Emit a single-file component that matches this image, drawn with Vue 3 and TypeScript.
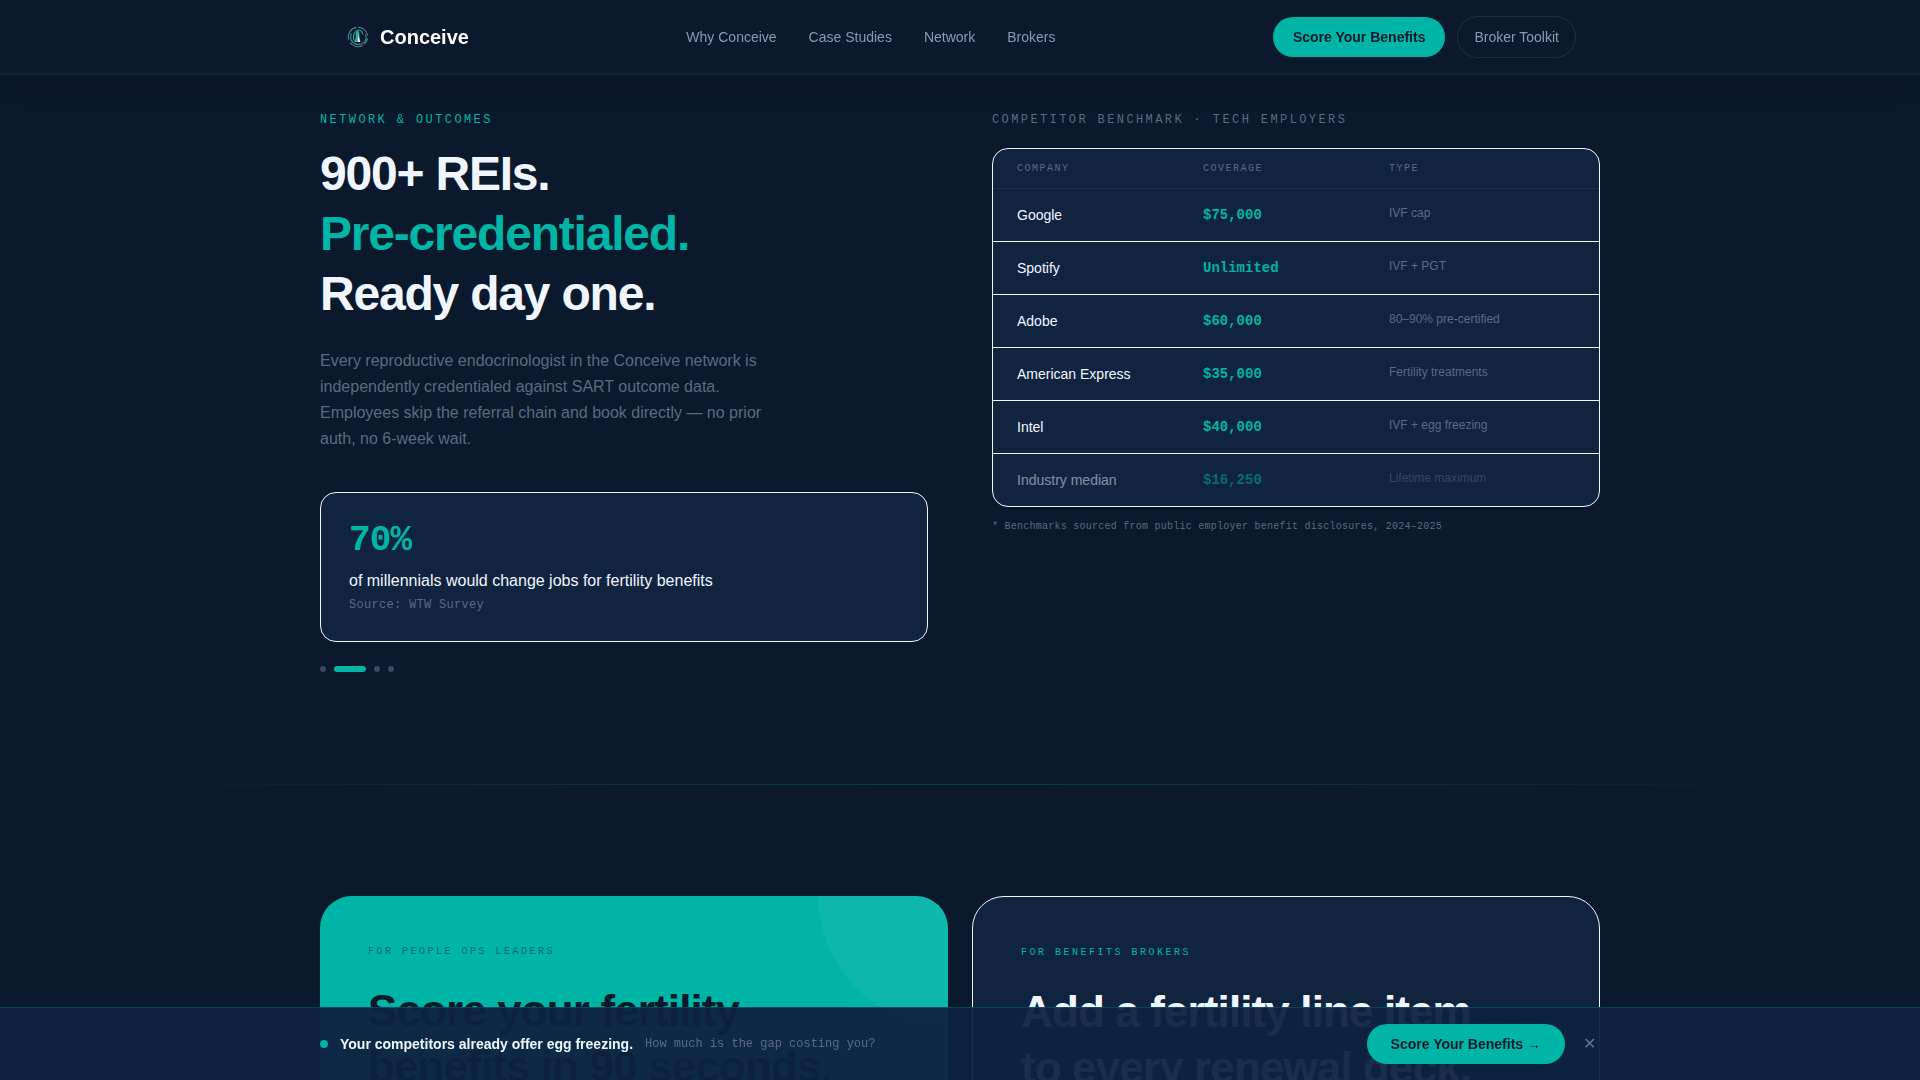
<script setup lang="ts">
import { ref } from 'vue'

interface Benchmark {
  company: string
  coverage: string
  type: string
  baseline?: boolean
}

interface Stat {
  value: string
  text: string
  source: string
}

const navLinks: string[] = ['Why Conceive', 'Case Studies', 'Network', 'Brokers']

const benchmarks: Benchmark[] = [
  { company: 'Google', coverage: '$75,000', type: 'IVF cap' },
  { company: 'Spotify', coverage: 'Unlimited', type: 'IVF + PGT' },
  { company: 'Adobe', coverage: '$60,000', type: '80–90% pre-certified' },
  { company: 'American Express', coverage: '$35,000', type: 'Fertility treatments' },
  { company: 'Intel', coverage: '$40,000', type: 'IVF + egg freezing' },
  { company: 'Industry median', coverage: '$16,250', type: 'Lifetime maximum', baseline: true },
]

const stat: Stat = {
  value: '70%',
  text: 'of millennials would change jobs for fertility benefits',
  source: 'Source: WTW Survey',
}

const slideCount = 4
const activeSlide = ref(2)
const barOpen = ref(true)
</script>

<template>
  <div class="page">
    <header class="header">
      <nav class="nav">
        <a class="brand" href="#">
          <svg class="logo" viewBox="0 0 28 28" fill="none" aria-hidden="true">
            <path d="M12.500 4.400a9.700 9.700 0 0 0-7.800 12.200M6 19.500a9.700 9.700 0 0 0 12.500 3.100" stroke="#5b7f90" stroke-width="1.100" />
            <path d="M14.500 4.300c4.500.3 8.300 3.700 9 8.200M23.500 15.500a9.700 9.700 0 0 1-3.500 6" stroke="#7a97a6" stroke-width="1" />
            <path d="M7.500 10.500a7.600 7.600 0 0 0 1.500 9c3 2.700 8 2.800 11-.2 2-2.100 2.500-5.300 1.200-8" stroke="#2b8d8b" stroke-width="1.200" />
            <path d="M10.500 18c-2-3-1.300-7.500 2-10.500 3.500-1.500 6 1 6.500 4" stroke="#1f9e97" stroke-width="1.100" />
            <path d="M14 7c-2.200 2.200-3 4.500-2 7l-1.500 5h5l-.4-5.500c.8-2.200.3-4.500-1.100-6.500z" fill="#2fae9f" />
            <path d="M14.400 11l2 8h-2.600z" fill="#d5f3f2" />
          </svg>
          <span>Conceive</span>
        </a>
        <div class="links">
          <a v-for="link in navLinks" :key="link" href="#">{{ link }}</a>
        </div>
        <div class="actions">
          <button type="button" class="btn btn-primary">Score Your Benefits</button>
          <button type="button" class="btn btn-outline">Broker Toolkit</button>
        </div>
      </nav>
    </header>

    <main>
      <section class="section network">
        <div>
          <p class="eyebrow teal">NETWORK &amp; OUTCOMES</p>
          <h2 class="headline">
            900+ REIs.<br />
            <span class="teal">Pre-credentialed.</span><br />
            Ready day one.
          </h2>
          <p class="lead">
            Every reproductive endocrinologist in the Conceive network is independently
            credentialed against SART outcome data. Employees skip the referral chain and book
            directly — no prior auth, no 6-week wait.
          </p>
          <article class="stat">
            <p class="stat-value">{{ stat.value }}</p>
            <p class="stat-text">{{ stat.text }}</p>
            <p class="stat-source">{{ stat.source }}</p>
          </article>
          <div class="dots">
            <button
              v-for="n in slideCount"
              :key="n"
              type="button"
              class="dot"
              :class="{ active: n === activeSlide }"
              :aria-label="`Slide ${n}`"
              @click="activeSlide = n"
            ></button>
          </div>
        </div>

        <div>
          <p class="eyebrow table-title">COMPETITOR BENCHMARK · TECH EMPLOYERS</p>
          <table class="bench">
            <thead>
              <tr>
                <th scope="col">COMPANY</th>
                <th scope="col">COVERAGE</th>
                <th scope="col">TYPE</th>
              </tr>
            </thead>
            <tbody>
              <tr v-for="row in benchmarks" :key="row.company" :class="{ baseline: row.baseline }">
                <td class="company">{{ row.company }}</td>
                <td class="coverage">{{ row.coverage }}</td>
                <td class="type">{{ row.type }}</td>
              </tr>
            </tbody>
          </table>
          <p class="note">* Benchmarks sourced from public employer benefit disclosures, 2024–2025</p>
        </div>
      </section>

      <div class="divider"></div>

      <section class="section cards">
        <article class="card card-teal">
          <p class="card-eyebrow">FOR PEOPLE OPS LEADERS</p>
          <h3>Score your fertility<br />benefits in 90 seconds.</h3>
        </article>
        <article class="card card-navy">
          <p class="card-eyebrow">FOR BENEFITS BROKERS</p>
          <h3>Add a fertility line item<br />to every renewal deck.</h3>
        </article>
      </section>
    </main>

    <aside v-if="barOpen" class="bar">
      <div class="bar-inner">
        <span class="pulse"></span>
        <strong>Your competitors already offer egg freezing.</strong>
        <span class="bar-note">How much is the gap costing you?</span>
        <div class="bar-actions">
          <button type="button" class="btn btn-primary btn-wide">Score Your Benefits →</button>
          <button type="button" class="close" aria-label="Dismiss" @click="barOpen = false">✕</button>
        </div>
      </div>
    </aside>
  </div>
</template>

<style>
body {
  margin: 0;
  background: #0a192b;
}
</style>

<style scoped>
.page {
  --teal: #00b4a6;
  --ink: #0a192b;
  --panel: #10243f;
  --light: #f0f6ff;
  --muted: #5b6a81;
  --mono: 'Liberation Mono', monospace;
  height: 100vh;
  overflow: hidden;
  background: var(--ink);
  color: var(--light);
  font-family: 'Liberation Sans', Arial, sans-serif;
  font-size: 16px;
  line-height: 24px;
}

.page * {
  box-sizing: border-box;
}

p,
h2,
h3 {
  margin: 0;
}

a {
  color: inherit;
  text-decoration: none;
}

button {
  margin: 0;
  border: 0;
  font-family: inherit;
  cursor: pointer;
}

.teal {
  color: var(--teal);
}

.header {
  position: fixed;
  inset: 0 0 auto;
  z-index: 10;
  background: #0a192b;
  border-bottom: 1px solid rgba(255, 255, 255, 0.05);
  box-shadow: 0 4px 32px rgba(0, 0, 0, 0.2);
}

.nav {
  display: flex;
  align-items: center;
  justify-content: space-between;
  max-width: 1280px;
  margin: 0 auto;
  padding: 16px 24px;
}

.brand {
  display: flex;
  align-items: center;
  gap: 8px;
  color: #fff;
  font-size: 20px;
  font-weight: 700;
  line-height: 28px;
}

.logo {
  width: 28px;
  height: 28px;
}

.links {
  display: flex;
  gap: 32px;
  color: #8a99af;
  font-size: 14px;
  line-height: 20px;
}

.actions {
  display: flex;
  align-items: center;
  gap: 12px;
}

.btn {
  padding: 10px 20px;
  border-radius: 24px;
  font-size: 14px;
  line-height: 20px;
}

.btn-primary {
  background: var(--teal);
  color: var(--ink);
  font-weight: 700;
}

.btn-wide {
  padding: 10px 24px;
}

.btn-outline {
  padding: 10px 16px;
  border: 1px solid rgba(148, 163, 184, 0.15);
  background: transparent;
  color: #8a99af;
}

.section {
  display: grid;
  grid-template-columns: repeat(2, minmax(0, 1fr));
  max-width: 1280px;
  margin: 0 auto;
  padding: 112px 0;
}

.network {
  gap: 64px;
}

.eyebrow {
  margin-bottom: 16px;
  font-family: var(--mono);
  font-size: 12px;
  line-height: 16px;
  letter-spacing: 0.2em;
}

.table-title {
  margin-bottom: 20px;
  color: var(--muted);
}

.headline {
  margin-bottom: 24px;
  font-size: 48px;
  font-weight: 700;
  line-height: 60px;
  letter-spacing: -0.025em;
}

.lead {
  max-width: 448px;
  margin-bottom: 40px;
  color: var(--muted);
  line-height: 26px;
}

.stat {
  padding: 28px;
  border: 1px solid var(--light);
  border-radius: 16px;
  background: var(--panel);
}

.stat-value {
  margin-bottom: 8px;
  color: var(--teal);
  font-family: var(--mono);
  font-size: 36px;
  font-weight: 700;
  line-height: 40px;
  letter-spacing: -0.025em;
}

.stat-source {
  margin-top: 4px;
  color: var(--muted);
  font-family: var(--mono);
  font-size: 12px;
  line-height: 16px;
  letter-spacing: 0.025em;
}

.dots {
  display: flex;
  gap: 8px;
  margin-top: 24px;
}

.dot {
  width: 6px;
  height: 6px;
  padding: 0;
  border-radius: 3px;
  background: #3a4960;
}

.dot.active {
  width: 32px;
  background: var(--teal);
}

.bench {
  display: block;
  overflow: hidden;
  border: 1px solid var(--light);
  border-radius: 16px;
  background: var(--panel);
}

.bench thead,
.bench tbody {
  display: block;
}

.bench tr {
  display: grid;
  grid-template-columns: repeat(3, minmax(0, 1fr));
  align-items: start;
  padding: 16px 24px;
  border-bottom: 1px solid var(--light);
}

.bench thead tr {
  padding: 12px 24px;
  border-bottom-color: rgba(255, 255, 255, 0.05);
}

.bench tbody tr:last-child {
  border-bottom: 0;
}

.bench th,
.bench td {
  padding: 0;
  text-align: left;
}

.bench th {
  color: var(--muted);
  font-family: var(--mono);
  font-size: 10px;
  font-weight: 400;
  line-height: 15px;
  letter-spacing: 0.15em;
}

.company,
.coverage {
  font-size: 14px;
  line-height: 20px;
}

.coverage {
  color: var(--teal);
  font-family: var(--mono);
  font-weight: 700;
}

.type {
  color: var(--muted);
  font-size: 12px;
  line-height: 16px;
}

.baseline td {
  opacity: 0.5;
}

.note {
  margin-top: 12px;
  color: var(--muted);
  font-family: var(--mono);
  font-size: 10px;
  line-height: 15px;
  letter-spacing: 0.025em;
}

.divider {
  height: 1px;
  margin-bottom: -1px;
  background: linear-gradient(90deg, transparent 5%, rgba(0, 180, 166, 0.25) 50%, transparent 95%);
}

.cards {
  gap: 24px;
}

.card {
  position: relative;
  overflow: hidden;
  padding: 48px;
  border-radius: 32px;
}

.card-teal {
  background: var(--teal);
  color: var(--ink);
}

.card-teal::after {
  content: '';
  position: absolute;
  top: -130px;
  right: -130px;
  width: 260px;
  height: 260px;
  border-radius: 50%;
  background: rgba(255, 255, 255, 0.05);
}

.card-navy {
  border: 1px solid var(--light);
  background: var(--panel);
}

.card-eyebrow {
  margin-bottom: 24px;
  font-family: var(--mono);
  font-size: 10px;
  line-height: 15px;
  letter-spacing: 0.25em;
}

.card-teal .card-eyebrow {
  opacity: 0.5;
}

.card-navy .card-eyebrow {
  color: var(--teal);
}

.card h3 {
  font-size: 44px;
  font-weight: 700;
  line-height: 56px;
  letter-spacing: -0.02em;
}

.bar {
  position: fixed;
  inset: auto 0 0;
  z-index: 10;
  border-top: 1px solid rgba(0, 180, 166, 0.25);
  background: rgba(14, 34, 64, 0.95);
}

.bar-inner {
  display: flex;
  align-items: center;
  gap: 12px;
  max-width: 1280px;
  margin: 0 auto;
  padding: 16px 0;
  font-size: 14px;
  line-height: 20px;
}

.pulse {
  width: 8px;
  height: 8px;
  border-radius: 50%;
  background: var(--teal);
}

.bar-note {
  color: var(--muted);
  font-family: var(--mono);
  font-size: 12px;
  line-height: 16px;
}

.bar-actions {
  display: flex;
  align-items: center;
  gap: 14px;
  margin-left: auto;
}

.close {
  padding: 4px;
  background: transparent;
  color: #64748b;
  font-size: 16px;
  line-height: 20px;
}
</style>
